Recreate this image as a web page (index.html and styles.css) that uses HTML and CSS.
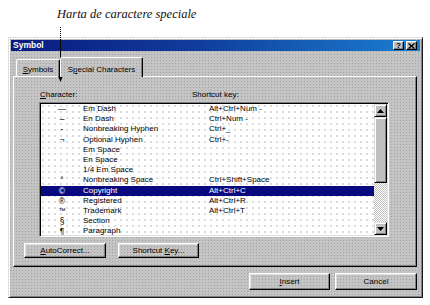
FILE: index.html
```html
<!DOCTYPE html>
<html>
<head>
<meta charset="utf-8">
<link rel="stylesheet" href="styles.css">
</head>
<body>
<div class="page">
  <div class="caption">Harta de caractere speciale</div>
  <div class="dialog">
    <div class="titlebar">
      <span class="title">Symbol</span>
      <div class="tbtns">
        <span class="tbtn q">?</span>
        <span class="tbtn"><svg width="7" height="6" viewBox="0 0 7 6"><path d="M0.5 0.5 L6.5 5.5 M6.5 0.5 L0.5 5.5" stroke="#000" stroke-width="1.4"/></svg></span>
      </div>
    </div>
    <div class="body">
      <div class="tabs">
        <div class="tab"><u>S</u>ymbols</div>
        <div class="tab active">S<u>p</u>ecial Characters</div>
      </div>
      <div class="panel">
        <div class="head"><span><u>C</u>haracter:</span><span>Shortcut key:</span></div>
        <div class="list">
          <div class="rows">
            <div class="row"><span class="sym">—</span><span>Em Dash</span><span>Alt+Ctrl+Num -</span></div>
            <div class="row"><span class="sym">–</span><span>En Dash</span><span>Ctrl+Num -</span></div>
            <div class="row"><span class="sym">-</span><span>Nonbreaking Hyphen</span><span>Ctrl+_</span></div>
            <div class="row"><span class="sym">¬</span><span>Optional Hyphen</span><span>Ctrl+-</span></div>
            <div class="row"><span class="sym"></span><span>Em Space</span><span></span></div>
            <div class="row"><span class="sym"></span><span>En Space</span><span></span></div>
            <div class="row"><span class="sym"></span><span>1/4 Em Space</span><span></span></div>
            <div class="row"><span class="sym">°</span><span>Nonbreaking Space</span><span>Ctrl+Shift+Space</span></div>
            <div class="row sel"><span class="sym">©</span><span>Copyright</span><span>Alt+Ctrl+C</span></div>
            <div class="row"><span class="sym">®</span><span>Registered</span><span>Alt+Ctrl+R</span></div>
            <div class="row"><span class="sym tm">™</span><span>Trademark</span><span>Alt+Ctrl+T</span></div>
            <div class="row"><span class="sym">§</span><span>Section</span><span></span></div>
            <div class="row"><span class="sym">¶</span><span>Paragraph</span><span></span></div>
          </div>
          <div class="scroll">
            <div class="sbtn"><svg width="7" height="4" viewBox="0 0 7 4"><path d="M3.5 0 L7 4 L0 4 Z" fill="#000"/></svg></div>
            <div class="thumb"></div>
            <div class="track"></div>
            <div class="sbtn"><svg width="7" height="4" viewBox="0 0 7 4"><path d="M0 0 L7 0 L3.5 4 Z" fill="#000"/></svg></div>
          </div>
        </div>
        <div class="btnrow">
          <button class="btn w82"><u>A</u>utoCorrect...</button>
          <button class="btn w81">Shortcut <u>K</u>ey...</button>
        </div>
      </div>
      <div class="footer">
        <button class="btn big w81"><u>I</u>nsert</button>
        <button class="btn big w82">Cancel</button>
      </div>
    </div>
  </div>
  <svg class="arrow" width="10" height="58" viewBox="0 0 10 58">
    <line x1="4.5" y1="1" x2="4.5" y2="13" stroke="#000" stroke-width="1" stroke-dasharray="1 1"/>
    <line x1="4.5" y1="13" x2="4.5" y2="51" stroke="#000" stroke-width="1"/>
    <polygon points="2,50 7,50 4.5,56" fill="#000"/>
  </svg>
</div>
</body>
</html>
```

FILE: styles.css
```css
* { box-sizing: border-box; }
html, body { margin: 0; padding: 0; background: #fff; }
body {
  width: 430px;
  height: 305px;
  overflow: hidden;
  font-family: "Liberation Sans", Arial, sans-serif;
  font-size: 8px;
  color: #000;
}
.page {
  position: relative;
  width: 430px;
  height: 305px;
  padding-top: 7px;
}
.caption {
  margin-left: 57px;
  font-family: "Liberation Serif", "Times New Roman", serif;
  font-style: italic;
  font-size: 12.5px;
  line-height: 15px;
  height: 15px;
  color: #111;
}
.dialog {
  margin: 15px 0 0 8px;
  width: 415px;
  height: 261px;
  background-color: #c4c4c4;
  background-image: radial-gradient(circle, #a2a2a2 0.6px, transparent 0.9px);
  background-size: 3px 3px;
  border: 1px solid;
  border-color: #dfdfdf #1a1a1a #1a1a1a #dfdfdf;
  box-shadow: inset 1px 1px #fff, inset -1px -1px #808080;
  padding: 2px;
  display: flex;
  flex-direction: column;
}
.titlebar {
  height: 11px;
  flex: none;
  background: linear-gradient(to right, #0a1a80 0%, #103c9c 45%, #1a7fd0 100%);
  display: flex;
  align-items: center;
  justify-content: space-between;
  padding: 0 3px 0 2px;
}
.title {
  color: #fff;
  font-weight: bold;
  font-size: 8.5px;
  line-height: 11px;
}
.tbtns { display: flex; gap: 2px; }
.tbtn {
  width: 11px;
  height: 9px;
  background: #c0c0c0;
  border: 1px solid;
  border-color: #fff #000 #000 #fff;
  box-shadow: inset -1px -1px #808080;
  display: flex;
  align-items: center;
  justify-content: center;
  font-weight: bold;
  font-size: 8px;
  line-height: 7px;
}
.body {
  flex: 1;
  display: flex;
  flex-direction: column;
  padding: 6px 3px 0 2px;
}
.tabs {
  display: flex;
  align-items: flex-end;
  height: 20px;
  padding-left: 3px;
  margin-bottom: -1px;
  position: relative;
  z-index: 1;
}
.tab {
  height: 17px;
  margin-bottom: 1px;
  width: 44px;
  padding-top: 4px;
  line-height: 11px;
  text-align: center;
  border: 1px solid;
  border-bottom: none;
  border-color: #fff #000 transparent #fff;
  border-radius: 2px 2px 0 0;
  box-shadow: inset -1px 0 #808080;
}
.tab.active {
  height: 20px;
  margin-bottom: 0;
  width: 83px;
  padding-top: 6px;
  background-color: #c4c4c4;
  background-image: radial-gradient(circle, #a2a2a2 0.6px, transparent 0.9px);
  background-size: 3px 3px;
  background-position: -1px -2px;
}
.panel {
  height: 191px;
  border: 1px solid;
  border-color: #fff #000 #000 #fff;
  box-shadow: inset -1px -1px #808080;
  padding: 13px 0 8px 10px;
  display: flex;
  flex-direction: column;
}
.head {
  margin-left: 15px;
  height: 10px;
  line-height: 10px;
  padding-left: 1px;
  display: grid;
  grid-template-columns: 152px 1fr;
  margin-bottom: 2px;
}
.list {
  margin-left: 15px;
  width: 350px;
  height: 135px;
  flex: none;
  padding: 1px;
  border: 1px solid;
  border-color: #808080 #fff #fff #808080;
  box-shadow: inset 1px 1px #000, inset -1px -1px #dfdfdf;
  background-color: #fff;
  background-image: radial-gradient(circle, #c8c8c8 0.6px, transparent 0.9px);
  background-size: 6px 6px;
  display: flex;
}
.rows {
  flex: 1;
  overflow: hidden;
}
.row {
  display: grid;
  grid-template-columns: 42px 126px 1fr;
  height: 10.2px;
  line-height: 10.2px;
  white-space: nowrap;
}
.sym { text-align: center; font-size: 8.5px; }
.sym.tm { font-size: 7px; }
.row.sel { background: #0a0a80; color: #fff; }
.scroll {
  width: 13px;
  flex: none;
  display: flex;
  flex-direction: column;
}
.sbtn {
  height: 13px;
  flex: none;
  background: #c0c0c0;
  border: 1px solid;
  border-color: #dfdfdf #000 #000 #dfdfdf;
  box-shadow: inset 1px 1px #fff, inset -1px -1px #808080;
  display: flex;
  align-items: center;
  justify-content: center;
}
.thumb {
  height: 66px;
  flex: none;
  background: #c0c0c0;
  border: 1px solid;
  border-color: #dfdfdf #000 #000 #dfdfdf;
  box-shadow: inset 1px 1px #fff, inset -1px -1px #808080;
}
.track {
  flex: 1;
  background: repeating-conic-gradient(#c0c0c0 0 25%, #fff 0 50%) 0 0 / 2px 2px;
}
.btnrow {
  margin-top: 6px;
  display: flex;
  gap: 12px;
}
.btn {
  font: inherit;
  color: #000;
  height: 15px;
  padding: 0;
  background: transparent;
  border: 1px solid;
  border-color: #fff #000 #000 #fff;
  box-shadow: inset -1px -1px #808080, inset 1px 1px #dfdfdf;
  text-align: center;
  line-height: 12px;
}
.btn.big { height: 17px; line-height: 14px; }
.w81 { width: 81px; }
.w82 { width: 82px; }
.footer {
  margin-top: 6px;
  display: flex;
  justify-content: flex-end;
  gap: 5px;
}
.arrow {
  position: absolute;
  left: 56px;
  top: 26px;
}
```
